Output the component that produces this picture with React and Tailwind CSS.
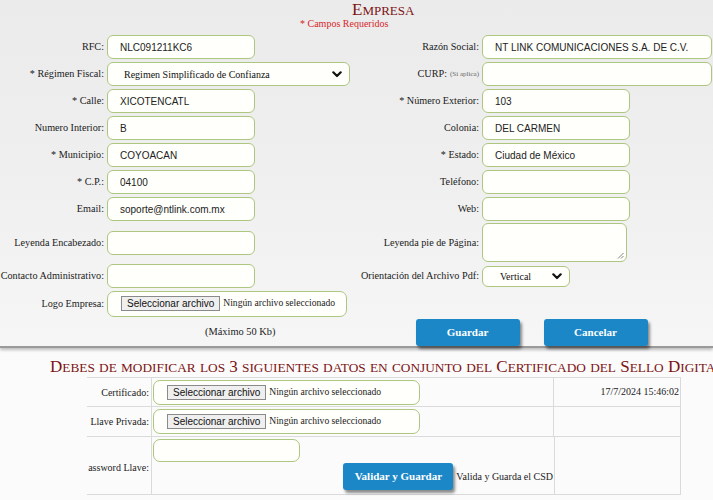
import React from "react";

const SERIF = "font-['Liberation_Serif','Times_New_Roman',serif]";
const SANS = "font-['Liberation_Sans',Arial,sans-serif]";

function SmallCaps({ text, big = false }) {
  const runs = [];
  for (const ch of text) {
    const small = /[a-záéíóúñ]/.test(ch);
    const last = runs[runs.length - 1];
    if (last && last.small === small) last.t += ch;
    else runs.push({ small, t: ch });
  }
  return runs.map((r, i) =>
    r.small ? (
      <span key={i} className={big ? "text-[13.3px] uppercase" : "text-[13px] uppercase"}>{r.t}</span>
    ) : (
      <span key={i} className="text-[17px]">{r.t}</span>
    )
  );
}

function Chevron() {
  return (
    <svg width="10" height="7" viewBox="0 0 10 7">
      <path d="M1.3 1.3 L5 5 L8.7 1.3" fill="none" stroke="#111" strokeWidth="2.2" strokeLinecap="round" strokeLinejoin="round" />
    </svg>
  );
}

function Label({ children }) {
  return (
    <div className={`flex items-center justify-end pr-[2px] text-[10.2px] text-[#1a1a1a] whitespace-nowrap ${SERIF}`}>
      {children}
    </div>
  );
}

function Cell({ children }) {
  return <div className="flex items-center">{children}</div>;
}

function TextBox({ value, w = "w-[148px]" }) {
  return (
    <div className={`h-[24px] ${w} ml-[1px] rounded-[6px] border border-[#adc680] bg-[#fffffb] flex items-center pl-[12px] text-[10px] text-[#222] ${SANS}`}>
      {value}
    </div>
  );
}

function FileBox({ w, h }) {
  return (
    <div className={`${w} ${h} ml-[1px] rounded-[7px] border border-[#adc680] bg-[#fffffb] flex items-center pl-[13px] gap-[3px]`}>
      <div className={`h-[15px] px-[5px] flex items-center border border-[#8a8a8a] bg-[#efefef] text-[10px] text-[#111] ${SANS}`}>
        Seleccionar archivo
      </div>
      <span className={`text-[9.6px] text-[#222] whitespace-nowrap ${SERIF}`}>Ningún archivo seleccionado</span>
    </div>
  );
}

function BlueButton({ children, w }) {
  return (
    <div className={`${w} h-[27px] rounded-[3px] bg-[#1b87c7] shadow-[2px_3px_3px_rgba(0,0,0,0.45)] flex items-center justify-center text-white text-[11px] font-bold ${SERIF}`}>
      {children}
    </div>
  );
}

export default function App() {
  return (
    <div className="w-[713px] h-[500px] overflow-hidden bg-[#fbfbfb]">
      {/* Top section */}
      <div className="h-[348px] bg-gradient-to-b from-[#ebebeb] via-[#efefef] to-[#f6f6f6] border-b-[2px] border-[#9a9a9a] shadow-[0_2px_3px_rgba(0,0,0,0.25)]">
        <div className={`pl-[352px] h-[18px] leading-[19px] text-[#7d1414] whitespace-nowrap ${SERIF}`}>
          <SmallCaps text="Empresa" />
        </div>
        <div className={`pl-[300px] h-[12px] leading-[12px] text-[10px] text-[#d8262a] ${SERIF}`}>
          * Campos Requeridos
        </div>
        <div className="mt-[3.5px] grid grid-cols-[106px_244px_131px_1fr] grid-rows-[27px_27px_27px_27px_27px_27px_27px_40px_27px_28px_30px]">
          {/* row 1 */}
          <Label>RFC:</Label>
          <Cell><TextBox value="NLC091211KC6" /></Cell>
          <Label>Razón Social:</Label>
          <Cell><TextBox value="NT LINK COMUNICACIONES S.A. DE C.V." w="w-[230px]" /></Cell>
          {/* row 2 */}
          <Label>* Régimen Fiscal:</Label>
          <Cell>
            <div className={`h-[24px] w-[243px] ml-[1px] rounded-[6px] border border-[#adc680] bg-[#fffffb] flex items-center justify-between pl-[16px] pr-[7px] text-[10px] text-[#111] ${SERIF}`}>
              <span>Regimen Simplificado de Confianza</span>
              <Chevron />
            </div>
          </Cell>
          <Label>
            CURP: <span className="text-[7px] text-[#666] ml-[3px]">(Si aplica)</span>
          </Label>
          <Cell><TextBox value="" w="w-[230px]" /></Cell>
          {/* row 3 */}
          <Label>* Calle:</Label>
          <Cell><TextBox value="XICOTENCATL" /></Cell>
          <Label>* Número Exterior:</Label>
          <Cell><TextBox value="103" /></Cell>
          {/* row 4 */}
          <Label>Numero Interior:</Label>
          <Cell><TextBox value="B" /></Cell>
          <Label>Colonia:</Label>
          <Cell><TextBox value="DEL CARMEN" /></Cell>
          {/* row 5 */}
          <Label>* Municipio:</Label>
          <Cell><TextBox value="COYOACAN" /></Cell>
          <Label>* Estado:</Label>
          <Cell><TextBox value="Ciudad de México" /></Cell>
          {/* row 6 */}
          <Label>* C.P.:</Label>
          <Cell><TextBox value="04100" /></Cell>
          <Label>Teléfono:</Label>
          <Cell><TextBox value="" /></Cell>
          {/* row 7 */}
          <Label>Email:</Label>
          <Cell><TextBox value="soporte@ntlink.com.mx" /></Cell>
          <Label>Web:</Label>
          <Cell><TextBox value="" /></Cell>
          {/* row 8 */}
          <Label>Leyenda Encabezado:</Label>
          <Cell><TextBox value="" /></Cell>
          <Label>Leyenda pie de Página:</Label>
          <Cell>
            <div className="relative h-[39px] w-[145px] ml-[1px] rounded-[6px] border border-[#adc680] bg-[#fffffb]">
              <svg className="absolute right-[2px] bottom-[2px]" width="7" height="7" viewBox="0 0 7 7">
                <path d="M6.5 1 L1 6.5 M6.5 4 L4 6.5" stroke="#777" strokeWidth="0.9" />
              </svg>
            </div>
          </Cell>
          {/* row 9 */}
          <Label>Contacto Administrativo:</Label>
          <Cell><TextBox value="" /></Cell>
          <Label>Orientación del Archivo Pdf:</Label>
          <Cell>
            <div className={`h-[21px] w-[88px] ml-[1px] rounded-[6px] border border-[#adc680] bg-[#fffffb] flex items-center justify-between pl-[17px] pr-[7px] text-[10px] text-[#111] ${SERIF}`}>
              <span>Vertical</span>
              <Chevron />
            </div>
          </Cell>
          {/* row 10 */}
          <Label>Logo Empresa:</Label>
          <Cell><FileBox w="w-[240px]" h="h-[26px]" /></Cell>
          <div />
          <div />
          {/* row 11 */}
          <div />
          <div className={`flex items-center pl-[99px] pb-[2px] text-[10.4px] text-[#222] ${SERIF}`}>(Máximo 50 Kb)</div>
          <div className="col-span-2 flex justify-center gap-[24px] pt-[1.5px]">
            <BlueButton w="w-[104px]">Guardar</BlueButton>
            <BlueButton w="w-[104px]">Cancelar</BlueButton>
          </div>
        </div>
      </div>

      {/* Bottom section */}
      <div className="pt-[8px]">
        <div className={`pl-[50px] h-[21px] leading-[21px] whitespace-nowrap text-[#7d1414] ${SERIF}`}>
          <SmallCaps big text="Debes de modificar los 3 siguientes datos en conjunto del Certificado del Sello Digital" />
        </div>
        <div className={`ml-[87px] w-[594px] grid grid-cols-[65px_402px_127px] grid-rows-[29px_30px_57px] border-t border-b border-r border-[#dadada] text-[10px] text-[#222] ${SERIF}`}>
          {/* row 1 */}
          <div className="flex items-center justify-end pr-[2px] border-b border-r border-[#dadada]">Certificado:</div>
          <div className="flex items-center border-b border-r border-[#dadada]">
            <FileBox w="w-[267px]" h="h-[25px]" />
          </div>
          <div className="flex items-center justify-end pr-[2px] pb-[2px] border-b border-[#dadada]">17/7/2024 15:46:02</div>
          {/* row 2 */}
          <div className="flex items-center justify-end pr-[2px] border-b border-r border-[#dadada] whitespace-nowrap">Llave Privada:</div>
          <div className="flex items-center border-b border-r border-[#dadada]">
            <FileBox w="w-[267px]" h="h-[25px]" />
          </div>
          <div className="border-b border-[#dadada]" />
          {/* row 3 */}
          <div className="flex items-center justify-end pr-[2px] pt-[3px] whitespace-nowrap border-r border-[#dadada]">
            <span>assword Llave:</span>
          </div>
          <div className="flex flex-col pt-[2px]">
            <div className="h-[23px] w-[147px] ml-[1px] rounded-[7px] border border-[#adc680] bg-[#fffffb]" />
            <div className="flex items-center justify-end pr-[1px] mt-[1px] gap-[3px]">
              <BlueButton w="w-[110px]">Validar y Guardar</BlueButton>
              <span className="whitespace-nowrap pb-[1px]">Valida y Guarda el CSD</span>
            </div>
          </div>
          <div className="border-l border-[#dadada]" />
        </div>
      </div>
    </div>
  );
}
